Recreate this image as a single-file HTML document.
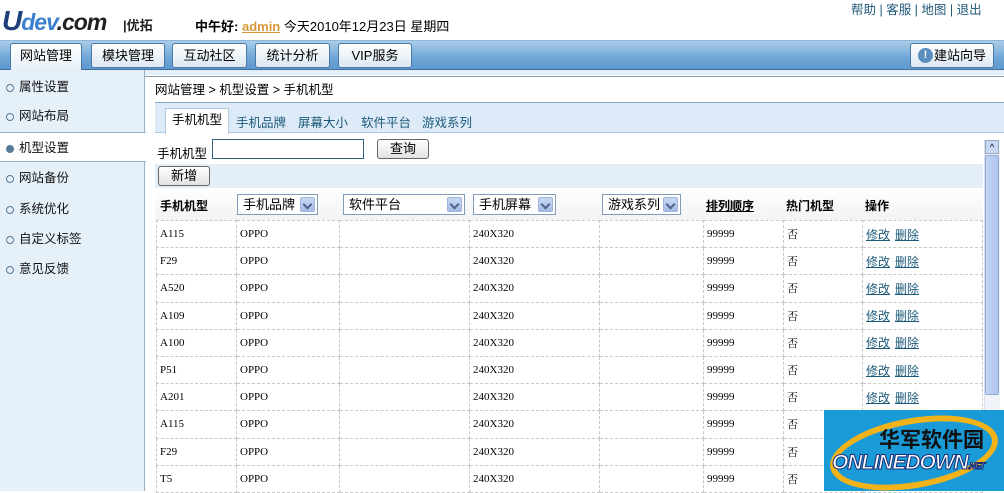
<!DOCTYPE html>
<html><head><meta charset="utf-8"><style>
*{margin:0;padding:0;box-sizing:border-box}
body{width:1004px;height:491px;overflow:hidden;background:#fff;font-family:"Liberation Sans","Noto Sans CJK SC",sans-serif;font-size:12px;color:#000;position:relative}
.a{position:absolute}
.nav{left:0;top:40px;width:1004px;height:30px;background:linear-gradient(#a9cdea,#6fa6d6 60%,#5f98cf);border-top:1px solid #8fb6d6;border-bottom:1px solid #3d6e9c}
.tab{top:43px;height:25px;border:1px solid #4a7aa8;border-radius:3px;background:linear-gradient(#fdfefe,#dde8f2);font-size:13px;text-align:center;line-height:23px;color:#000}
.side{left:0;top:70px;width:145px;height:421px;background:#e6f0f8;border-right:1px solid #9ab0c4}
.si{left:0;width:145px;height:30px;line-height:30px;padding-left:19px;font-size:12.5px;color:#111}
.si:before{content:"";position:absolute;left:6px;top:12px;width:6px;height:6px;border:1px solid #557a99;border-radius:50%}
.si.on{background:#fff;border-top:1px solid #9ab0c4;border-bottom:1px solid #9ab0c4;width:146px}
.si.on:before{background:#557a99}
.btn{border:1px solid #666;border-radius:3px;background:linear-gradient(#fff,#e2e2e2);text-align:center;font-size:13px}
.sel{top:194px;height:21px;border:1px solid #7f9db9;font-size:13px;line-height:19px;padding-left:5px;background:#fff}
.sel i{position:absolute;right:2px;top:2px;width:15px;height:15px;background:linear-gradient(#c8d8f2,#a3bce8);border:1px solid #9fb3dc;border-radius:2px}
.sel i:after{content:"";position:absolute;left:3px;top:3px;width:5px;height:5px;border-right:2px solid #4d6185;border-bottom:2px solid #4d6185;transform:rotate(45deg)}
table{position:absolute;left:156px;top:220px;border-collapse:collapse;font-family:"Liberation Serif","Noto Serif CJK SC",serif;font-size:11px}
td{height:27.2px;border:1px dashed #c8c8c8;padding-left:3px;vertical-align:middle}
td a{color:#1d5a7a;text-decoration:underline;font-family:"Liberation Sans","Noto Sans CJK SC",sans-serif;font-size:12px;margin-right:5px}
.h{top:197px;font-weight:bold;font-size:12px}
.st{top:112px;font-size:12.5px;color:#1d5a7a}
</style></head><body>
<div class="a" style="left:2px;top:5px;font:italic bold 23px 'Liberation Sans',sans-serif;color:#1a5aa0;letter-spacing:-1px"><span style="color:#1f3f7a;font-size:28px">U</span><span style="color:#3a7fd0">dev</span><span style="color:#222">.com</span></div>
<div class="a" style="left:123px;top:15px;font-size:13px;font-weight:bold;color:#222">|优拓</div>
<div class="a" style="left:195px;top:16px;font-size:13px"><b>中午好:</b> <b style="color:#d79a3a;text-decoration:underline">admin</b> 今天2010年12月23日 星期四</div>
<div class="a" style="left:851px;top:-1px;font-size:12.5px;color:#235a7a">帮助 | 客服 | 地图 | 退出</div>
<div class="a nav"></div>
<div class="a" style="left:0;top:70px;width:1004px;height:5px;background:#e3eef8"></div>
<div class="a tab" style="left:10px;width:72px;height:29px;border-bottom:none;border-radius:3px 3px 0 0;background:linear-gradient(#fff,#e3eef8)">网站管理</div>
<div class="a tab" style="left:91px;width:74px">模块管理</div>
<div class="a tab" style="left:172px;width:75px">互动社区</div>
<div class="a tab" style="left:255px;width:75px">统计分析</div>
<div class="a tab" style="left:338px;width:74px">VIP服务</div>
<div class="a tab" style="left:910px;width:84px;padding-left:16px"><span style="position:absolute;left:7px;top:4px;width:15px;height:15px;border-radius:50%;background:#5b8fbf;color:#fff;font-size:11px;line-height:15px;font-weight:bold">!</span>建站向导</div>
<div class="a side"></div>
<div class="a si" style="top:72px">属性设置</div>
<div class="a si" style="top:101px">网站布局</div>
<div class="a si on" style="top:132px">机型设置</div>
<div class="a si" style="top:163px">网站备份</div>
<div class="a si" style="top:194px">系统优化</div>
<div class="a si" style="top:224px">自定义标签</div>
<div class="a si" style="top:254px">意见反馈</div>
<div class="a" style="left:145px;top:76px;width:859px;height:26px;border-top:1px solid #8aa0b4;"></div>
<div class="a" style="left:155px;top:79px;font-size:12.5px">网站管理 &gt; 机型设置 &gt; 手机机型</div>
<div class="a" style="left:155px;top:102px;width:849px;height:31px;background:#dcebf7;border-top:1px solid #8aa8c4;border-bottom:1px solid #b0c8dc"></div>
<div class="a" style="left:165px;top:108px;width:64px;height:26px;background:#fff;border:1px solid #b0c8dc;border-bottom:none;font-size:12.5px;line-height:22px;text-align:center">手机机型</div>
<div class="a st" style="left:236px">手机品牌</div>
<div class="a st" style="left:298px">屏幕大小</div>
<div class="a st" style="left:361px">软件平台</div>
<div class="a st" style="left:422px">游戏系列</div>
<div class="a" style="left:157px;top:143px;font-size:12.5px">手机机型</div>
<div class="a" style="left:212px;top:139px;width:152px;height:20px;border:1px solid #2f5f7f"></div>
<div class="a btn" style="left:377px;top:139px;width:52px;height:20px;line-height:18px">查询</div>
<div class="a" style="left:155px;top:164px;width:828px;height:24px;background:#e3eef8"></div>
<div class="a btn" style="left:158px;top:166px;width:52px;height:20px;line-height:18px">新增</div>
<div class="a" style="left:155px;top:188px;width:828px;height:32px;background:linear-gradient(#fff,#f3f3f3)"></div>
<div class="a h" style="left:160px">手机机型</div>
<div class="a sel" style="left:237px;width:81px">手机品牌<i></i></div>
<div class="a sel" style="left:343px;width:122px">软件平台<i></i></div>
<div class="a sel" style="left:473px;width:83px">手机屏幕<i></i></div>
<div class="a sel" style="left:602px;width:79px">游戏系列<i></i></div>
<div class="a h" style="left:706px;text-decoration:underline">排列顺序</div>
<div class="a h" style="left:786px">热门机型</div>
<div class="a h" style="left:865px">操作</div>
<table>
<colgroup><col style="width:80px"><col style="width:103px"><col style="width:130px"><col style="width:130px"><col style="width:104px"><col style="width:80px"><col style="width:79px"><col style="width:120px"></colgroup>
<tr><td>A115</td><td>OPPO</td><td></td><td>240X320</td><td></td><td>99999</td><td>否</td><td><a>修改</a><a>删除</a></td></tr>
<tr><td>F29</td><td>OPPO</td><td></td><td>240X320</td><td></td><td>99999</td><td>否</td><td><a>修改</a><a>删除</a></td></tr>
<tr><td>A520</td><td>OPPO</td><td></td><td>240X320</td><td></td><td>99999</td><td>否</td><td><a>修改</a><a>删除</a></td></tr>
<tr><td>A109</td><td>OPPO</td><td></td><td>240X320</td><td></td><td>99999</td><td>否</td><td><a>修改</a><a>删除</a></td></tr>
<tr><td>A100</td><td>OPPO</td><td></td><td>240X320</td><td></td><td>99999</td><td>否</td><td><a>修改</a><a>删除</a></td></tr>
<tr><td>P51</td><td>OPPO</td><td></td><td>240X320</td><td></td><td>99999</td><td>否</td><td><a>修改</a><a>删除</a></td></tr>
<tr><td>A201</td><td>OPPO</td><td></td><td>240X320</td><td></td><td>99999</td><td>否</td><td><a>修改</a><a>删除</a></td></tr>
<tr><td>A115</td><td>OPPO</td><td></td><td>240X320</td><td></td><td>99999</td><td>否</td><td></td></tr>
<tr><td>F29</td><td>OPPO</td><td></td><td>240X320</td><td></td><td>99999</td><td>否</td><td></td></tr>
<tr><td>T5</td><td>OPPO</td><td></td><td>240X320</td><td></td><td>99999</td><td>否</td><td></td></tr>
</table>
<div class="a" style="left:984px;top:140px;width:16px;height:351px;background:#f0f4f8;border-left:1px solid #dde"></div>
<div class="a" style="left:985px;top:140px;width:14px;height:14px;background:#c8d8f4;border:1px solid #9ab;font-size:9px;text-align:center;line-height:12px">^</div>
<div class="a" style="left:985px;top:155px;width:14px;height:240px;background:linear-gradient(90deg,#c4d4f4,#b0c6ee);border:1px solid #8ea8d8;border-radius:2px"></div>
<div class="a" style="left:824px;top:410px;width:180px;height:81px;background:#1a9ad6;overflow:hidden">
<div class="a" style="left:5px;top:8px;width:170px;height:70px;border:6px solid #f2b21a;border-radius:50%;transform:rotate(-10deg)"></div>
<div class="a" style="left:55px;top:14px;font-size:21px;font-weight:bold;color:#111">华军软件园</div>
<div class="a" style="left:8px;top:41px;font:italic bold 21px 'Liberation Sans',sans-serif;color:#fff;-webkit-text-stroke:1px #1b2f7a;letter-spacing:-1px">ONLINEDOWN<span style="font-size:9px">.NET</span></div>
</div>
</body></html>
